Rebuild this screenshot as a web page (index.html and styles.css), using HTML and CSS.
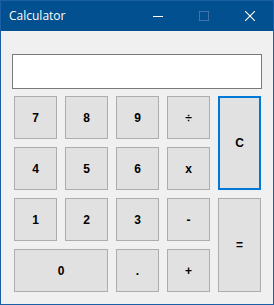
FILE: index.html
```html
<!DOCTYPE html>
<html lang="en">
<head>
    <meta charset="UTF-8">
    <title>Calculator</title>
    <link rel="stylesheet" href="styles.css">
</head>
<body>
    <div class="window">
        <div class="titlebar">
            <span class="title">Calculator</span>
            <div class="controls">
                <span class="ctrl">
                    <svg width="10" height="10" viewBox="0 0 10 10"><line x1="0" y1="5.5" x2="10" y2="5.5" stroke="#fff" stroke-width="1"/></svg>
                </span>
                <span class="ctrl disabled">
                    <svg width="10" height="10" viewBox="0 0 10 10"><rect x="0.5" y="0.5" width="9" height="9" fill="none" stroke="#3f77ad" stroke-width="1"/></svg>
                </span>
                <span class="ctrl">
                    <svg width="10" height="10" viewBox="0 0 10 10"><path d="M0 0 L10 10 M10 0 L0 10" stroke="#fff" stroke-width="1.1"/></svg>
                </span>
            </div>
        </div>

        <div class="client">
            <div class="display"></div>

            <div class="keys">
                <button class="key">7</button>
                <button class="key">8</button>
                <button class="key">9</button>
                <button class="key">÷</button>
                <button class="key clear">C</button>

                <button class="key">4</button>
                <button class="key">5</button>
                <button class="key">6</button>
                <button class="key">x</button>

                <button class="key">1</button>
                <button class="key">2</button>
                <button class="key">3</button>
                <button class="key">-</button>
                <button class="key equals">=</button>

                <button class="key zero">0</button>
                <button class="key">.</button>
                <button class="key">+</button>
            </div>
        </div>
    </div>
</body>
</html>
```

FILE: styles.css
```css
body {
    margin: 0;
    background-color: #f0f0f0;
}

.window {
    width: 274px;
    height: 305px;
    box-sizing: border-box;
    border: 1px solid #1b5fa6;
    background-color: #f0f0f0;
}

.titlebar {
    height: 30px;
    background-color: #02508f;
    display: flex;
    align-items: center;
    justify-content: space-between;
}

.title {
    color: #fff;
    font-family: "Open Sans", "Noto Sans", sans-serif;
    font-size: 12px;
    padding-left: 8px;
    margin-top: -1px;
}

.controls {
    display: flex;
    height: 100%;
}

.ctrl {
    width: 46px;
    display: flex;
    align-items: center;
    justify-content: center;
}

.ctrl svg {
    display: block;
}

.client {
    padding: 23px 11px 0 11px;
}

.display {
    width: 250px;
    height: 35px;
    box-sizing: border-box;
    background-color: #fff;
    border: 1px solid #7a7a7a;
}

.keys {
    margin: 7px 0 0 2px;
    display: grid;
    grid-template-columns: repeat(5, 43px);
    grid-auto-rows: 43px;
    gap: 8px;
}

.key {
    margin: 0;
    padding: 0;
    background-color: #e1e1e1;
    border: 1px solid #adadad;
    font-family: "Liberation Sans", Arial, sans-serif;
    font-weight: bold;
    font-size: 12px;
    color: #000;
}

.clear {
    grid-column: 5;
    grid-row: 1 / span 2;
    border: 2px solid #0078d7;
}

.equals {
    grid-column: 5;
    grid-row: 3 / span 2;
}

.zero {
    grid-column: span 2;
}
```
